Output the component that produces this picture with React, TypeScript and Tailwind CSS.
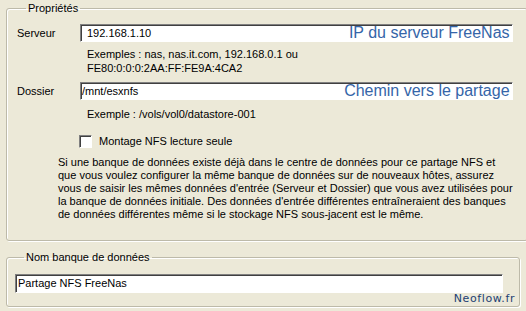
import React from 'react';

const sunken = 'bg-white border-t border-l border-[#808080] border-b border-r border-b-white border-r-white shadow-[inset_1px_1px_0_#404040]';
const groupBox = 'border border-[#bdbaa9] rounded-[3px] shadow-[inset_1px_1px_0_#fff,1px_1px_0_#fff]';

function Field({ label, value, hint, pad }: { label: string; value: string; hint: string; pad?: boolean }) {
  return (
    <div className="flex items-center">
      <div className="w-[63px] shrink-0">{label}</div>
      <div className={`relative flex-1 h-[18px] flex items-center ${sunken}`}>
        <span className={pad ? 'pl-[6px]' : 'pl-[1px]'}>{value}</span>
        <span className="absolute right-[2px] top-[-2px] text-[16px] leading-[20px] text-[#3565a8]">{hint}</span>
      </div>
    </div>
  );
}

export default function App() {
  const lines = [
    'Si une banque de données existe déjà dans le centre de données pour ce partage NFS et',
    'que vous voulez configurer la même banque de données sur de nouveaux hôtes, assurez',
    "vous de saisir les mêmes données d'entrée (Serveur et Dossier) que vous avez utilisées pour",
    "la banque de données initiale. Des données d'entrée différentes entraîneraient des banques",
    'de données différentes même si le stockage NFS sous-jacent est le même.',
  ];

  return (
    <div className="relative w-[526px] h-[311px] bg-[#ECE9D8] px-[6px] pt-[2px] text-[11px] leading-[13px] text-black font-['Liberation_Sans',Arial,sans-serif]">
      <fieldset className={`${groupBox} pl-[10px] pr-[14px] pb-[19px]`}>
        <legend className="ml-[9px] px-[2px]">Propriétés</legend>
        <div className="mt-[9px]">
          <Field label="Serveur" value="192.168.1.10" hint="IP du serveur FreeNas" pad />
        </div>
        <div className="ml-[70px] mt-[5px] leading-[14px]">
          Exemples : nas, nas.it.com, 192.168.0.1 ou
          <br />
          FE80:0:0:0:2AA:FF:FE9A:4CA2
        </div>
        <div className="mt-[7px]">
          <Field label="Dossier" value="/mnt/esxnfs" hint="Chemin vers le partage" />
        </div>
        <div className="ml-[70px] mt-[8px]">Exemple : /vols/vol0/datastore-001</div>
        <label className="flex items-center gap-[7px] ml-[62px] mt-[14px]">
          <span className={`w-[13px] h-[13px] ${sunken}`} />
          <span>Montage NFS lecture seule</span>
        </label>
        <div className="ml-[41px] mt-[8px] whitespace-nowrap">
          {lines.map(l => (
            <div key={l}>{l}</div>
          ))}
        </div>
      </fieldset>

      <fieldset className={`${groupBox} mt-[10px] pl-[8px] pr-[16px] pb-[13px]`}>
        <legend className="ml-[9px] px-[2px]">Nom banque de données</legend>
        <div className={`mt-[10px] h-[19px] flex items-center pl-[2px] ${sunken}`}>Partage NFS FreeNas</div>
      </fieldset>

      <div className="absolute right-[11px] bottom-[7px] text-[11px] leading-[11px] tracking-[0.6px] text-[#1d3f73] font-['DejaVu_Sans',sans-serif]">
        Neoflow.fr
      </div>
    </div>
  );
}
